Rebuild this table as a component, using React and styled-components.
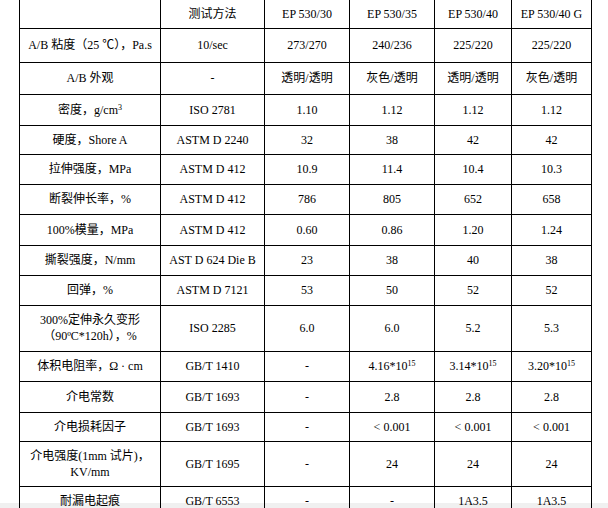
import styled, { createGlobalStyle } from "styled-components";

const GlobalStyle = createGlobalStyle`
  html, body {
    margin: 0;
    padding: 0;
    background: #ffffff;
    overflow: hidden;
  }
  body {
    font-family: "Liberation Serif", "Noto Sans CJK SC", serif;
    color: #000000;
  }
`;

const Page = styled.div`
  width: 608px;
  height: 508px;
  padding-left: 19px;
  box-sizing: border-box;
  overflow: hidden;
`;

const Table = styled.table`
  border-collapse: collapse;
  table-layout: fixed;
  width: 573px;
  font-size: 12px;
`;

const Row = styled.tr`
  height: ${(p) => p.$h}px;
`;

const Cell = styled.td`
  border: 1px solid #000000;
  border-top: ${(p) => (p.$top ? "none" : "1px solid #000000")};
  text-align: center;
  vertical-align: middle;
  padding: 0 2px;
  line-height: 16px;
  white-space: nowrap;
`;

const Sup = styled.sup`
  font-size: 8px;
  line-height: 0;
  vertical-align: 4px;
`;

const BottomStrip = styled.div`
  position: fixed;
  left: 0;
  right: 0;
  bottom: 0;
  height: 5px;
  background: rgba(0, 0, 0, 0.06);
`;

const widths = [141, 104, 85, 85, 77, 80];

const pow = (base) => (
  <>
    {base}*10<Sup>15</Sup>
  </>
);

const rows = [
  { h: 34, cells: ["A/B 粘度（25 ℃），Pa.s", "10/sec", "273/270", "240/236", "225/220", "225/220"] },
  { h: 32, cells: ["A/B 外观", "-", "透明/透明", "灰色/透明", "透明/透明", "灰色/透明"] },
  { h: 31, cells: [<>密度，g/cm<Sup>3</Sup></>, "ISO 2781", "1.10", "1.12", "1.12", "1.12"] },
  { h: 29, cells: ["硬度，Shore A", "ASTM D 2240", "32", "38", "42", "42"] },
  { h: 30, cells: ["拉伸强度，MPa", "ASTM D 412", "10.9", "11.4", "10.4", "10.3"] },
  { h: 30, cells: ["断裂伸长率，%", "ASTM D 412", "786", "805", "652", "658"] },
  { h: 31, cells: ["100%模量，MPa", "ASTM D 412", "0.60", "0.86", "1.20", "1.24"] },
  { h: 30, cells: ["撕裂强度，N/mm", "AST D 624 Die B", "23", "38", "40", "38"] },
  { h: 30, cells: ["回弹，%", "ASTM D 7121", "53", "50", "52", "52"] },
  { h: 46, cells: [<>300%定伸永久变形<br />（90ºC*120h），%</>, "ISO 2285", "6.0", "6.0", "5.2", "5.3"] },
  { h: 30, cells: ["体积电阻率，Ω · cm", "GB/T 1410", "-", pow("4.16"), pow("3.14"), pow("3.20")] },
  { h: 31, cells: ["介电常数", "GB/T 1693", "-", "2.8", "2.8", "2.8"] },
  { h: 29, cells: ["介电损耗因子", "GB/T 1693", "-", "< 0.001", "< 0.001", "< 0.001"] },
  { h: 45, cells: [<>介电强度(1mm 试片)，<br />KV/mm</>, "GB/T 1695", "-", "24", "24", "24"] },
  { h: 30, cells: ["耐漏电起痕", "GB/T 6553", "-", "-", "1A3.5", "1A3.5"] },
];

const header = ["", "测试方法", "EP 530/30", "EP 530/35", "EP 530/40", "EP 530/40 G"];

export default function App() {
  return (
    <>
      <GlobalStyle />
      <Page>
        <Table>
          <colgroup>
            {widths.map((w, i) => (
              <col key={i} style={{ width: w }} />
            ))}
          </colgroup>
          <tbody>
            <Row $h={28}>
              {header.map((t, i) => (
                <Cell key={i} $top>
                  {t}
                </Cell>
              ))}
            </Row>
            {rows.map((r, i) => (
              <Row key={i} $h={r.h}>
                {r.cells.map((c, j) => (
                  <Cell key={j}>{c}</Cell>
                ))}
              </Row>
            ))}
          </tbody>
        </Table>
      </Page>
      <BottomStrip />
    </>
  );
}
